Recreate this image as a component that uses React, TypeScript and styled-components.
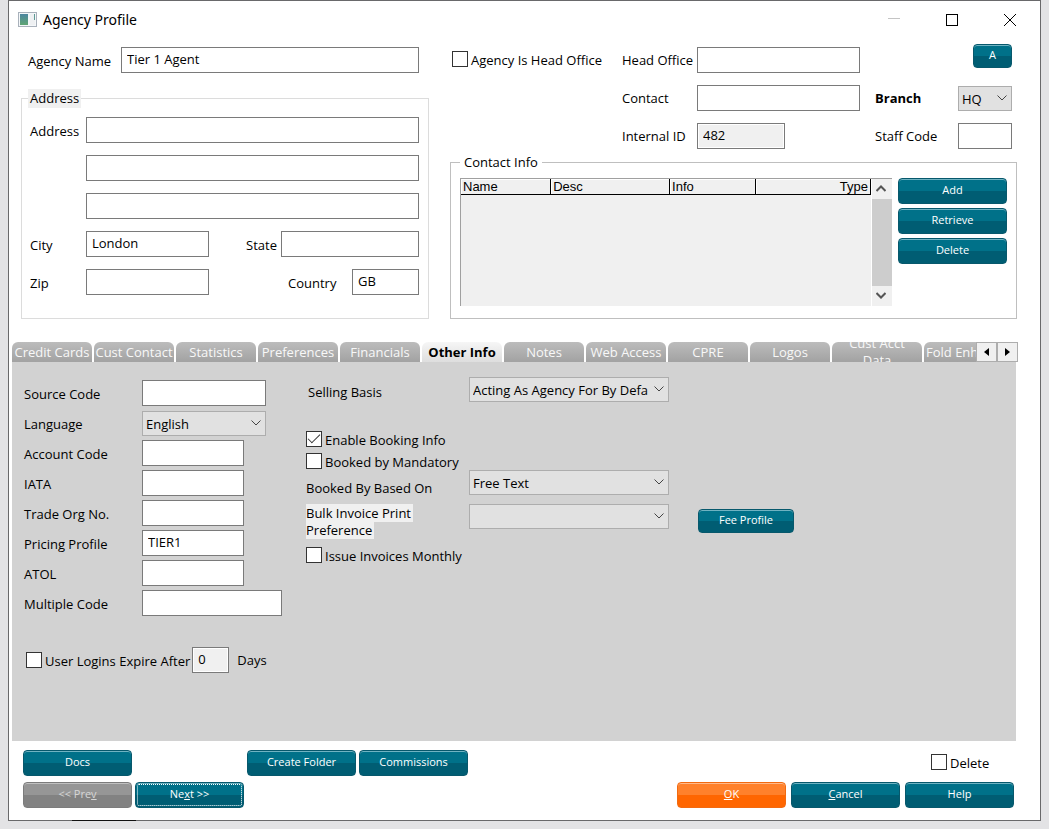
import React from "react";
import styled, { createGlobalStyle, css } from "styled-components";

const GlobalStyle = createGlobalStyle`
  * { box-sizing: border-box; }
  body {
    margin: 0;
    background: #e3e3e5;
    color: #000;
    font-family: "Open Sans", "Noto Sans", sans-serif;
    font-size: 13px;
    line-height: 18px;
  }
  button, input, select { font: inherit; color: inherit; margin: 0; }
`;

const Window = styled.div`
  position: relative;
  display: flex;
  flex-direction: column;
  min-height: calc(100vh - 8px);
  margin: 0 8px 8px;
  border: 1px solid #69696b;
  background: #fff;

  &::after {
    content: "";
    position: absolute;
    left: 63px;
    bottom: -1px;
    width: 64px;
    height: 1px;
    background: #111;
  }
`;

const TitleBar = styled.header`
  display: flex;
  align-items: center;
  height: 38px;
  padding: 0 1px 0 9px;
`;

const Title = styled.h1`
  flex: 1;
  margin: 0 0 0 6px;
  font-family: "Noto Sans", sans-serif;
  font-size: 14px;
  font-weight: 400;
  line-height: 20px;
`;

const WindowButton = styled.button`
  display: flex;
  align-items: center;
  justify-content: center;
  width: 58px;
  height: 36px;
  padding: 0;
  border: 0;
  background: transparent;
`;

const Main = styled.main`
  display: flex;
  flex: 1;
  flex-direction: column;
  padding: 0 22px 12px 3px;
`;

const Profile = styled.div`
  display: grid;
  grid-template-columns: 408fr 567fr;
  column-gap: 21px;
  padding: 5px 1px 0 9px;
`;

const Column = styled.div`
  display: flex;
  flex-direction: column;
  min-width: 0;
`;

const Field = styled.div`
  display: flex;
  align-items: center;
  min-height: 26px;
`;

const Label = styled.label<{ $w?: number; $strong?: boolean }>`
  flex: none;
  width: ${(p) => (p.$w ? `${p.$w}px` : "auto")};
  padding-top: 2px;
  font-weight: ${(p) => (p.$strong ? 700 : 400)};
  white-space: nowrap;
`;

const TextInput = styled.input<{ $w?: number; $muted?: boolean }>`
  ${(p) => (p.$w ? css`flex: none; width: ${p.$w}px;` : css`flex: 1; width: 100%;`)}
  min-width: 0;
  height: 26px;
  padding: 0 5px 2px;
  border: 1px solid #7a7a7a;
  border-radius: 0;
  outline: 0;
  background: ${(p) => (p.$muted ? "#f0f0f0" : "#fff")};
  box-shadow: inset 0 0 0 1px #fff;
`;

const SelectBox = styled.div<{ $w?: number }>`
  position: relative;
  flex: none;
  width: ${(p) => (p.$w ? `${p.$w}px` : "100%")};
  height: 25px;

  svg {
    position: absolute;
    top: 9px;
    right: 5px;
    pointer-events: none;
  }
`;

const Select = styled.select`
  width: 100%;
  height: 25px;
  padding: 1px 18px 0 3px;
  border: 1px solid #adadad;
  border-radius: 0;
  outline: 0;
  background: #e1e1e1;
  appearance: none;
`;

const CheckLabel = styled.label`
  display: flex;
  align-items: center;
  gap: 3px;
  height: 16px;
  white-space: nowrap;

  span { padding-top: 2px; }
`;

const CheckBox = styled.input`
  display: grid;
  flex: none;
  place-items: center;
  width: 16px;
  height: 16px;
  border: 1px solid #333;
  background: #fff;
  appearance: none;

  &:checked::before {
    content: "";
    width: 11px;
    height: 5px;
    border: solid #333;
    border-width: 0 0 1px 1px;
    transform: translateY(-2px) rotate(-45deg);
  }
`;

const tones = {
  teal: { edge: "#07586c", shine: "#6fb3c2", top: "#007189", bottom: "#005d73", text: "#fff" },
  orange: { edge: "#f26a10", shine: "#ffb98a", top: "#ff812b", bottom: "#ff6600", text: "#fff" },
  gray: { edge: "#7c7c7c", shine: "#c0c0c0", top: "#969696", bottom: "#828282", text: "#d6d6d6" },
};

const Button = styled.button<{ $tone?: keyof typeof tones; $small?: boolean; $w?: number }>`
  width: ${(p) => p.$w ?? 109}px;
  height: ${(p) => (p.$small ? 24 : 26)}px;
  padding: 0 0 2px;
  border: 1px solid ${(p) => tones[p.$tone ?? "teal"].edge};
  border-radius: 4px;
  color: ${(p) => tones[p.$tone ?? "teal"].text};
  background: linear-gradient(
    ${(p) => tones[p.$tone ?? "teal"].top} 50%,
    ${(p) => tones[p.$tone ?? "teal"].bottom} 50%
  );
  box-shadow: inset 0 1px 0 ${(p) => tones[p.$tone ?? "teal"].shine};
  font-size: 11px;
  line-height: 16px;
`;

const FocusButton = styled(Button)`
  outline: 1px dotted #fff;
  outline-offset: -3px;
`;

const Group = styled.fieldset<{ $edge: string }>`
  flex: 1;
  min-width: 0;
  margin: 0;
  border: 1px solid ${(p) => p.$edge};
`;

const AddressGroup = styled(Group)`
  margin-top: 16px;
  padding: 9px 9px 21px 6px;
`;

const ContactGroup = styled(Group)`
  margin-top: 4px;
  padding: 6px 9px 12px;
`;

const Legend = styled.legend<{ $shaded?: boolean }>`
  height: 19px;
  padding: ${(p) => (p.$shaded ? "0 2px" : "0 4px")};
  background: ${(p) => (p.$shaded ? "#f0f0f0" : "#fff")};
`;

const AgencyName = styled(Field)`
  padding: 0 10px 0 7px;
  margin-top: 3px;
`;

const AddressRows = styled.div`
  display: grid;
  gap: 12px;
  padding-left: 2px;
`;

const Trailing = styled.div<{ $gap: number }>`
  display: flex;
  align-items: center;
  gap: ${(p) => p.$gap}px;
  margin-left: auto;
`;

const OfficeGrid = styled.div`
  display: grid;
  grid-template-columns: 172px 75px minmax(0, 1fr) 98px 54px;
  grid-auto-rows: 26px;
  row-gap: 12px;
  align-items: center;
  margin-top: 3px;
  padding-right: 5px;
`;

const HeadOfficeCheck = styled.div`
  padding: 0 0 2px 2px;
`;

const Blank = styled.div``;

const OfficeLabel = styled(Label)`
  padding: 0 0 0 ${(p) => (p.$w ? 0 : 15)}px;
`;

const CornerAction = styled.div`
  display: flex;
  grid-column: span 2;
  justify-content: flex-end;
  padding-bottom: 8px;
`;

const ContactLayout = styled.div`
  display: flex;
  gap: 6px;
  height: 100%;
`;

const ListBox = styled.div`
  display: flex;
  flex: 1;
  height: 128px;
  border: solid #a0a0a0;
  border-width: 1px 0 0 1px;
  background: #f0f0f0;
`;

const ListTable = styled.table`
  flex: 1;
  align-self: flex-start;
  border-collapse: separate;
  border-spacing: 0;
  table-layout: fixed;
  font-family: "Liberation Sans", Arial, sans-serif;
  line-height: 15px;
`;

const HeadCell = styled.th<{ $w: string; $right?: boolean }>`
  width: ${(p) => p.$w};
  height: 16px;
  padding: 0 2px;
  border: solid #000;
  border-width: 0 1px 1px 0;
  box-shadow: inset 1px 1px 0 #fff;
  font-weight: 400;
  text-align: ${(p) => (p.$right ? "right" : "left")};
`;

const ScrollBar = styled.div`
  display: flex;
  flex-direction: column;
  width: 21px;
  border-left: 1px solid #fff;
`;

const ScrollArrow = styled.button`
  display: flex;
  flex: none;
  align-items: center;
  justify-content: center;
  height: 20px;
  padding: 0 2px 2px 0;
  border: 0;
  background: #f0f0f0;
`;

const ScrollThumb = styled.div`
  flex: 1;
  background: #cdcdcd;
`;

const ActionStack = styled.div`
  display: flex;
  flex-direction: column;
  gap: 4px;
`;

const TabBar = styled.div`
  display: flex;
  height: 20px;
  margin-top: 23px;
`;

const TabList = styled.div`
  display: flex;
  flex: 1;
  gap: 2px;
  min-width: 0;
  overflow: hidden;
`;

const Tab = styled.button<{ $active?: boolean; $wide?: boolean; $nowrap?: boolean }>`
  display: flex;
  flex: none;
  align-items: center;
  justify-content: ${(p) => (p.$nowrap ? "flex-start" : "center")};
  width: ${(p) => (p.$wide ? 90 : 80)}px;
  height: 20px;
  padding: ${(p) => (p.$wide ? "0 12px" : p.$nowrap ? "0 2px" : "0")};
  overflow: hidden;
  border: 0;
  border-radius: 6px 6px 0 0;
  color: ${(p) => (p.$active ? "#000" : "#f8f8f8")};
  background: ${(p) =>
    p.$active ? "linear-gradient(#f6f6f6, #dedede)" : "linear-gradient(#bcbcbc, #a2a2a2)"};
  font-weight: ${(p) => (p.$active ? 700 : 400)};
  line-height: 17px;
  white-space: ${(p) => (p.$wide ? "normal" : "nowrap")};
`;

const TabScroll = styled.button`
  display: flex;
  flex: none;
  align-items: center;
  justify-content: center;
  width: 21px;
  height: 20px;
  padding: 0;
  border: 1px solid #adadad;
  background: #f0f0f0;
`;

const Panel = styled.section`
  flex: 1;
  margin-right: 2px;
  padding: 15px 12px 68px;
  background: #d2d2d2;
`;

const PanelGrid = styled.div`
  display: grid;
  grid-template-columns: 282px 163px minmax(0, 200px) 1fr;
`;

const CodeRows = styled.div`
  display: grid;
  gap: 4px;
  align-content: start;
  padding-top: 3px;
`;

const OptionLabels = styled.div`
  display: flex;
  flex-direction: column;
  align-items: flex-start;
`;

const SellingLabel = styled(Label)`
  height: 54px;
  padding: 6px 2px 0;
`;

const Checks = styled.div`
  display: grid;
  gap: 6px;
`;

const BasedOnLabel = styled(Label)`
  padding: 10px 0 8px;
`;

const BulkLabel = styled.label`
  margin-bottom: 8px;
  line-height: 17px;
  white-space: nowrap;

  span {
    padding-right: 2px;
    background: #f0f0f0;
    box-decoration-break: clone;
  }
`;

const OptionSelects = styled.div`
  display: flex;
  flex-direction: column;
  gap: 9px;
`;

const SellingSelect = styled.div`
  height: 84px;
`;

const FeeAction = styled.div`
  padding: 132px 0 0 29px;
`;

const Expiry = styled.div`
  display: flex;
  align-items: center;
  gap: 2px;
  margin-top: 31px;
  padding-left: 2px;
`;

const Unit = styled.span`
  padding-left: 6px;
`;

const Footer = styled.footer`
  display: flex;
  justify-content: space-between;
  padding: 9px 4px 0 11px;
`;

const FooterGrid = styled.div<{ $cols: number; $gap: number }>`
  display: grid;
  grid-template-columns: repeat(${(p) => p.$cols}, 109px);
  grid-auto-rows: 26px;
  gap: 6px ${(p) => p.$gap}px;
  align-items: center;
`;

const DeleteCheck = styled.div`
  grid-column: 3;
  padding: 0 0 2px 26px;
`;

const Chevron = () => (
  <svg width="10" height="6" viewBox="0 0 10 6" fill="none" stroke="#444" aria-hidden="true">
    <path d="M0.5 0.5 5 5 9.5 0.5" />
  </svg>
);

const AppIcon = () => (
  <svg width="19" height="16" viewBox="0 0 19 16" aria-hidden="true">
    <defs>
      <linearGradient id="pane" x1="0" y1="0" x2="0" y2="1">
        <stop offset="0" stopColor="#4c86a0" />
        <stop offset="1" stopColor="#5fa573" />
      </linearGradient>
    </defs>
    <rect x="0.5" y="0.5" width="18" height="14" fill="#f4f7f9" stroke="#a9b1bb" />
    <rect x="2" y="2" width="8" height="11" fill="url(#pane)" />
    <rect x="12" y="2" width="5" height="11" fill="#eef0f2" />
    <rect x="16" y="2" width="1" height="6" fill="#5f9a95" />
  </svg>
);

type DropProps = { id: string; value: string; w?: number };

const Drop = ({ id, value, w }: DropProps) => (
  <SelectBox $w={w}>
    <Select id={id} defaultValue={value}>
      <option>{value}</option>
    </Select>
    <Chevron />
  </SelectBox>
);

const Check = ({ text, checked }: { text: string; checked?: boolean }) => (
  <CheckLabel>
    <CheckBox type="checkbox" defaultChecked={checked} />
    <span>{text}</span>
  </CheckLabel>
);

const codeFields = [
  { id: "source", label: "Source Code", w: 124 },
  { id: "language", label: "Language", w: 124, select: "English" },
  { id: "account", label: "Account Code", w: 102 },
  { id: "iata", label: "IATA", w: 102 },
  { id: "trade", label: "Trade Org No.", w: 102 },
  { id: "pricing", label: "Pricing Profile", w: 102, value: "TIER1" },
  { id: "atol", label: "ATOL", w: 102 },
  { id: "multiple", label: "Multiple Code", w: 140 },
];

const tabs = [
  "Credit Cards",
  "Cust Contact",
  "Statistics",
  "Preferences",
  "Financials",
  "Other Info",
  "Notes",
  "Web Access",
  "CPRE",
  "Logos",
  "Cust Acct Data",
  "Fold Enh",
];

export default function App() {
  return (
    <>
      <GlobalStyle />
      <Window>
        <TitleBar>
          <AppIcon />
          <Title>Agency Profile</Title>
          <WindowButton aria-label="Minimize">
            <svg width="12" height="12" viewBox="0 0 12 12" stroke="#c4c4c4">
              <path d="M0 4.500H12" />
            </svg>
          </WindowButton>
          <WindowButton aria-label="Maximize">
            <svg width="12" height="12" viewBox="0 0 12 12" fill="none" stroke="#000">
              <rect x="0.5" y="0.5" width="11" height="11" />
            </svg>
          </WindowButton>
          <WindowButton aria-label="Close">
            <svg width="12" height="12" viewBox="0 0 12 12" stroke="#000">
              <path d="M0 0 12 12M12 0 0 12" />
            </svg>
          </WindowButton>
        </TitleBar>

        <Main>
          <Profile>
            <Column>
              <AgencyName>
                <Label htmlFor="agency" $w={93}>Agency Name</Label>
                <TextInput id="agency" defaultValue="Tier 1 Agent" />
              </AgencyName>
              <AddressGroup $edge="#dcdcdc">
                <Legend $shaded>Address</Legend>
                <AddressRows>
                  <Field>
                    <Label htmlFor="address1" $w={56}>Address</Label>
                    <TextInput id="address1" />
                  </Field>
                  <Field>
                    <Label as="span" $w={56} />
                    <TextInput aria-label="Address line 2" />
                  </Field>
                  <Field>
                    <Label as="span" $w={56} />
                    <TextInput aria-label="Address line 3" />
                  </Field>
                  <Field>
                    <Label htmlFor="city" $w={56}>City</Label>
                    <TextInput id="city" $w={123} defaultValue="London" />
                    <Trailing $gap={4}>
                      <Label htmlFor="state">State</Label>
                      <TextInput id="state" $w={138} />
                    </Trailing>
                  </Field>
                  <Field>
                    <Label htmlFor="zip" $w={56}>Zip</Label>
                    <TextInput id="zip" $w={123} />
                    <Trailing $gap={0}>
                      <Label htmlFor="country" $w={64}>Country</Label>
                      <TextInput id="country" $w={67} defaultValue="GB" />
                    </Trailing>
                  </Field>
                </AddressRows>
              </AddressGroup>
            </Column>

            <Column>
              <OfficeGrid>
                <HeadOfficeCheck>
                  <Check text="Agency Is Head Office" />
                </HeadOfficeCheck>
                <OfficeLabel htmlFor="head" $w={75}>Head Office</OfficeLabel>
                <TextInput id="head" />
                <CornerAction>
                  <Button $small $w={39}>A</Button>
                </CornerAction>

                <Blank />
                <OfficeLabel htmlFor="contact" $w={75}>Contact</OfficeLabel>
                <TextInput id="contact" />
                <OfficeLabel htmlFor="branch" $strong>Branch</OfficeLabel>
                <Drop id="branch" value="HQ" w={54} />

                <Blank />
                <OfficeLabel htmlFor="internal" $w={75}>Internal ID</OfficeLabel>
                <TextInput id="internal" $w={88} $muted readOnly defaultValue="482" />
                <OfficeLabel htmlFor="staff">Staff Code</OfficeLabel>
                <TextInput id="staff" />
              </OfficeGrid>

              <ContactGroup $edge="#bfbfbf">
                <Legend>Contact Info</Legend>
                <ContactLayout>
                  <ListBox>
                    <ListTable>
                      <thead>
                        <tr>
                          <HeadCell $w="22%">Name</HeadCell>
                          <HeadCell $w="29%">Desc</HeadCell>
                          <HeadCell $w="21%">Info</HeadCell>
                          <HeadCell $w="28%" $right>Type</HeadCell>
                        </tr>
                      </thead>
                    </ListTable>
                    <ScrollBar>
                      <ScrollArrow aria-label="Scroll up">
                        <svg width="10" height="7" viewBox="0 0 10 7" fill="none" stroke="#555" strokeWidth="2">
                          <path d="M0.5 6 5 1.500 9.500 6" />
                        </svg>
                      </ScrollArrow>
                      <ScrollThumb />
                      <ScrollArrow aria-label="Scroll down">
                        <svg width="10" height="7" viewBox="0 0 10 7" fill="none" stroke="#555" strokeWidth="2">
                          <path d="M0.5 1 5 5.500 9.500 1" />
                        </svg>
                      </ScrollArrow>
                    </ScrollBar>
                  </ListBox>
                  <ActionStack>
                    <Button>Add</Button>
                    <Button>Retrieve</Button>
                    <Button>Delete</Button>
                  </ActionStack>
                </ContactLayout>
              </ContactGroup>
            </Column>
          </Profile>

          <TabBar>
            <TabList role="tablist">
              {tabs.map((name) => (
                <Tab
                  key={name}
                  role="tab"
                  aria-selected={name === "Other Info"}
                  $active={name === "Other Info"}
                  $wide={name === "Cust Acct Data"}
                  $nowrap={name === "Fold Enh"}
                >
                  {name}
                </Tab>
              ))}
            </TabList>
            <TabScroll aria-label="Previous tabs">
              <svg width="5" height="8" viewBox="0 0 5 8">
                <path d="M5 0V8L0 4Z" />
              </svg>
            </TabScroll>
            <TabScroll aria-label="More tabs">
              <svg width="5" height="8" viewBox="0 0 5 8">
                <path d="M0 0V8L5 4Z" />
              </svg>
            </TabScroll>
          </TabBar>

          <Panel>
            <PanelGrid>
              <CodeRows>
                {codeFields.map((f) => (
                  <Field key={f.id}>
                    <Label htmlFor={f.id} $w={118}>{f.label}</Label>
                    {f.select ? (
                      <Drop id={f.id} value={f.select} w={f.w} />
                    ) : (
                      <TextInput id={f.id} $w={f.w} defaultValue={f.value} />
                    )}
                  </Field>
                ))}
              </CodeRows>

              <OptionLabels>
                <SellingLabel htmlFor="selling">Selling Basis</SellingLabel>
                <Checks>
                  <Check text="Enable Booking Info" checked />
                  <Check text="Booked by Mandatory" />
                </Checks>
                <BasedOnLabel htmlFor="basedon">Booked By Based On</BasedOnLabel>
                <BulkLabel htmlFor="bulk">
                  <span>
                    Bulk Invoice Print
                    <br />
                    Preference
                  </span>
                </BulkLabel>
                <Check text="Issue Invoices Monthly" />
              </OptionLabels>

              <OptionSelects>
                <SellingSelect>
                  <Drop id="selling" value="Acting As Agency For By Defa" />
                </SellingSelect>
                <Drop id="basedon" value="Free Text" />
                <Drop id="bulk" value="" />
              </OptionSelects>

              <FeeAction>
                <Button $small $w={96}>Fee Profile</Button>
              </FeeAction>
            </PanelGrid>

            <Expiry>
              <Check text="User Logins Expire After" />
              <TextInput $w={37} $muted aria-label="Days until expiry" defaultValue="0" />
              <Unit>Days</Unit>
            </Expiry>
          </Panel>

          <Footer>
            <FooterGrid $cols={4} $gap={3}>
              <Button>Docs</Button>
              <Blank />
              <Button>Create Folder</Button>
              <Button>Commissions</Button>
              <Button $tone="gray">&lt;&lt; Pre<u>v</u></Button>
              <FocusButton>Ne<u>x</u>t &gt;&gt;</FocusButton>
            </FooterGrid>
            <FooterGrid $cols={3} $gap={5}>
              <DeleteCheck>
                <Check text="Delete" />
              </DeleteCheck>
              <Button $tone="orange"><u>O</u>K</Button>
              <Button><u>C</u>ancel</Button>
              <Button>Help</Button>
            </FooterGrid>
          </Footer>
        </Main>
      </Window>
    </>
  );
}
